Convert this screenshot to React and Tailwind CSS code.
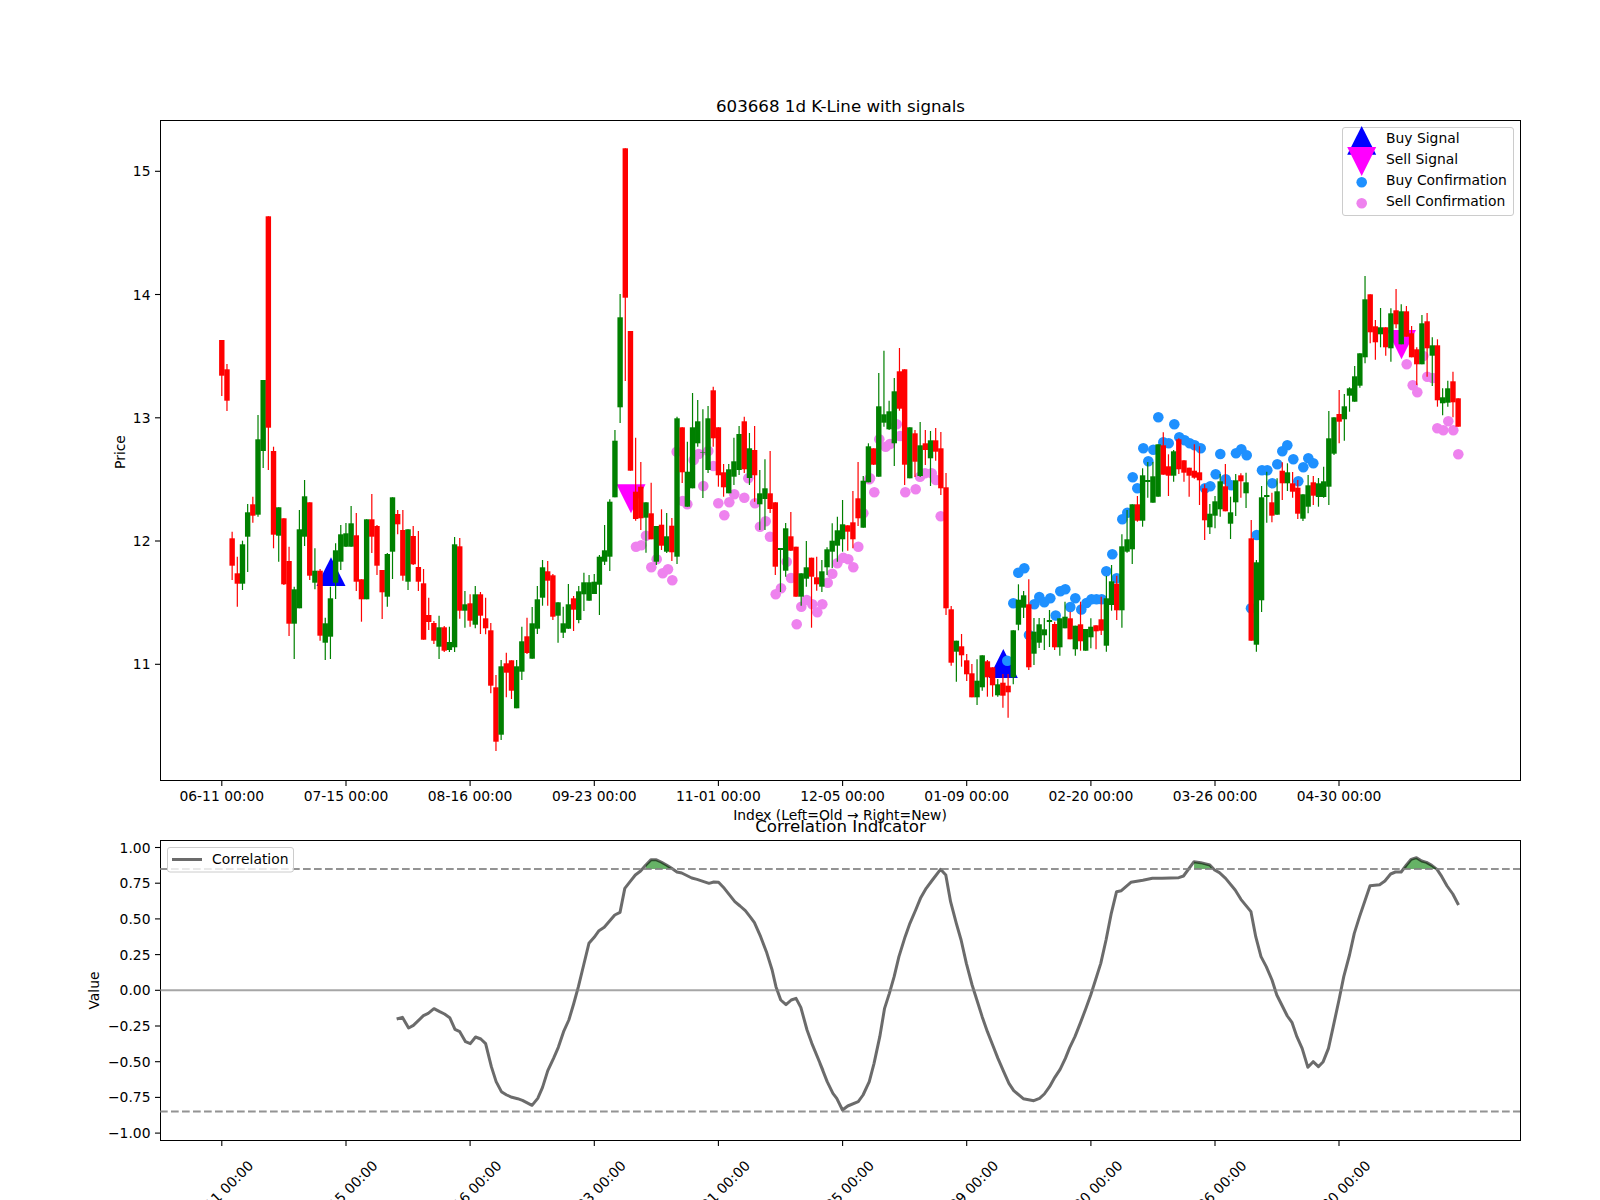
const R = '#ff0000';
const G = '#008000';
// [bodyTop, bodyBottom, wickTop, wickBottom, colour] in page pixels; one row per trading day, oldest first
const C = [
[340,375.7,340,396,'r'],[369.3,400.7,364,411,'r'],[538.3,565.7,531.7,580,'r'],[573.3,583.7,556.7,606.7,'r'],[544.3,583.7,540.7,590,'g'],
[512.3,536.7,504,572,'g'],[504.3,515.7,496.7,522.7,'r'],[439.3,514.7,415,516.7,'g'],[380,451,380,468,'g'],[216.3,427.7,216.3,470,'r'],
[451,534.7,446.7,548.3,'r'],[507.3,535.7,507.3,561.7,'g'],[518.3,584.3,518.3,585,'r'],[561,623.7,546.7,636,'r'],[589.3,623.7,586.7,659,'g'],
[529.3,608.3,510,608.3,'g'],[496.3,536.7,480,546,'g'],[502.3,575.7,502.3,580,'r'],[570.7,582.7,548.3,589.3,'g'],[570.7,635.7,569,640.7,'r'],
[623.3,642.7,617.7,660,'g'],[598.3,636.7,586.7,659,'g'],[550.3,582.7,543.3,599,'g'],[534.3,561.7,525,570,'g'],[533.3,546.7,523,547,'g'],
[523.3,546.7,506,546.7,'g'],[535.3,581.7,513,591,'r'],[579.3,599.3,579.3,621.7,'r'],[519.3,599.3,519.3,599.3,'g'],[519.3,536.7,494,553,'r'],
[526,565.7,525,575,'r'],[570,592.3,570,619,'r'],[554,596.7,553,606.7,'g'],[497.3,551.7,497.3,579,'g'],[514,524.3,510,534.3,'r'],
[530,575.7,510,580.7,'r'],[529.3,581.7,529.3,590,'g'],[536,564.3,526,565,'r'],[567,581.7,531,591,'r'],[583.3,639.7,569,639.7,'r'],
[615,622,597.7,630,'r'],[623,640.7,621,644,'r'],[627.3,646.7,615.7,659,'g'],[627.3,650.7,626,652,'r'],[642,650,626.7,652,'g'],
[544.3,647.3,537,652,'g'],[546.3,610.7,538,618.7,'r'],[604.3,610.7,591,627.7,'g'],[603.3,620.7,594.3,626.7,'r'],[594.3,624.7,586,628.3,'g'],
[594.3,615.7,592,634,'r'],[618.3,628.3,597.7,634.3,'r'],[630.3,685.7,623,693.3,'r'],[687.3,741.7,675,751,'r'],[666.3,734.7,660,740,'g'],
[663.3,672.7,652.7,697.3,'r'],[660.3,690.7,660.3,699,'r'],[666.3,708.3,660,708.3,'g'],[641.3,671.7,626.7,680,'g'],[636.3,653,617.7,654,'r'],
[623.3,658.7,607,658.7,'g'],[599.3,628.7,586,634,'g'],[567.3,597.7,560,605.7,'g'],[571.3,580.7,561,605.7,'r'],[575.3,616.7,574,620,'r'],
[602.3,615.7,602.3,642.7,'g'],[623.3,632.7,606.7,638,'g'],[604.3,628.7,584,628.7,'g'],[598.3,609.7,596,631,'r'],[591.3,620,586,623.3,'g'],
[582.3,594.3,572.7,611,'g'],[582.3,600.7,575,600.7,'g'],[581.7,594,574,594,'g'],[556.7,584.7,555,615,'g'],[550.3,561.7,525,565,'g'],
[501.7,556.7,499.3,571,'g'],[440.7,497.3,430,497.3,'g'],[317.3,407.3,294,423,'g'],[148.3,297.7,148.3,381,'r'],[331,470.7,331,470.7,'r'],
[491.7,519,437.7,520.7,'r'],[486.7,518.3,462,530,'r'],[502.3,517.7,502.3,552.7,'g'],[513.3,539.3,482.7,539.3,'r'],[526,561.7,526,565,'g'],
[524.7,545.7,509.3,550,'r'],[536.3,551.7,513,553,'g'],[525.7,552.3,518,561,'r'],[418.3,556.7,416.7,564,'g'],[427.3,472.3,427.3,483,'r'],
[471.7,506.7,441.7,506.7,'g'],[427.3,488.3,393,488.3,'g'],[421.3,443.3,400,446.7,'g'],[452,452.5,409.3,498,'g'],[418.3,470,406,473,'g'],
[390.3,438.3,386.7,446.7,'r'],[427.3,475.3,427.3,486.7,'r'],[472.3,487.3,464,496.7,'r'],[469.3,493.3,464,493.3,'g'],[461.3,476.7,437.7,485,'g'],
[434,470,426,475,'g'],[421.3,469.3,416.7,473,'r'],[448.3,478,433,485,'g'],[450,475.3,426,501.7,'r'],[493.3,504.3,470,530,'g'],
[488.3,499,459.3,530,'g'],[493.3,509,451,513,'r'],[502.3,566.7,502.3,575,'r'],[548,550,550,592,'g'],[528.3,570.7,523,576.7,'g'],
[536.3,550.7,512,551,'r'],[546.7,596.7,546.7,596.7,'r'],[573.3,596.7,573.3,605.7,'g'],[567.3,578.7,541,586.7,'g'],[557.7,576.7,557.7,627.7,'r'],
[577.3,584.3,556.7,590.7,'r'],[571.3,586.7,560,592,'g'],[549.3,567.3,547.3,575,'g'],[540.7,551.7,523.3,568,'g'],[530.3,545.7,516.7,561.7,'g'],
[524.3,539.3,500,551.7,'g'],[525.3,531.7,525.3,550.7,'r'],[522.3,539.3,491,548.3,'r'],[498.3,518.3,462,526,'r'],[480.7,527.7,476,527.7,'g'],
[446.3,482.3,443.3,482.3,'g'],[448.3,464.7,448.3,465,'r'],[406.3,476.7,373,476.7,'g'],[414.3,422.7,350.7,426.7,'g'],[411.3,429.3,400.7,430,'g'],
[391.3,443.3,378,466,'g'],[371.3,408.7,348,410.7,'r'],[369.3,464.7,369.3,485,'r'],[427.3,478.3,427.3,478.3,'g'],[433.3,461.7,430,477,'r'],
[445.3,476,422,477,'g'],[443.3,450,430,465,'r'],[440.3,458.3,431,486,'g'],[440.3,451.7,428,460.7,'r'],[448.3,488.3,432,495,'r'],
[487.3,608.3,473,615,'r'],[609.3,662.7,606,665.7,'r'],[640.7,651.7,640.7,681.7,'g'],[646.3,655.3,634,666.7,'r'],[660.3,674.3,654,681,'r'],
[673.3,697.3,664,697.3,'r'],[680.7,697.3,659.3,705,'g'],[655.3,687.3,655.3,690.7,'g'],[661.3,677.3,660,696.7,'r'],[667.3,685.3,667.3,696.7,'r'],
[684.3,695.3,679,696.7,'g'],[682.7,695.7,674,707.7,'r'],[685.7,692.3,674,717.7,'r'],[630.3,677.3,630.3,684.3,'g'],[599.7,624.7,584.3,630.3,'g'],
[595.3,607.7,591,618,'g'],[604.3,667.3,579.3,670,'r'],[631.7,653.7,618,665,'g'],[624.3,642.7,618,648,'g'],[629.3,635.3,618,650,'g'],
[620,622,610,647,'g'],[624,647.3,621.7,650,'r'],[618.3,647.3,618.3,655.7,'g'],[616.7,628.3,601.7,628.3,'g'],[618.3,639.3,611.7,639.3,'r'],
[625.7,649.3,625.7,655.7,'g'],[624.3,641.3,601.7,650.7,'r'],[629,650.7,629,650.7,'g'],[626.7,637.3,618.3,648.3,'g'],[625.3,631.3,625.3,649.3,'r'],
[619.3,630.7,596.7,635,'r'],[598.3,645.7,576,651.7,'g'],[581.3,605,565,610.7,'g'],[583.7,610.3,575.7,620,'r'],[546.3,610.3,534.3,627.7,'g'],
[539.3,551.7,510,552.7,'g'],[504.3,549.3,504.3,564,'g'],[504.3,520.7,496,521.7,'r'],[475.3,520.7,468.3,526.7,'g'],[480,482,462,497.7,'g'],
[476.3,502.7,462,502.7,'g'],[444.3,496.7,444.3,496.7,'g'],[445.3,474.7,432.3,474.7,'r'],[466.3,475.7,454.3,496,'r'],[451.3,475.7,450,481.7,'g'],
[439.3,469.3,438.3,474,'r'],[460.3,472.7,460.3,481.7,'r'],[467.7,475.7,467.7,496.7,'r'],[470.7,477.7,444.3,478.7,'r'],[472.3,480.3,446.3,505,'r'],
[488.3,520.3,484.3,540,'r'],[513.7,527.3,504,534,'g'],[501.3,515.7,496,528.3,'g'],[481.3,509.3,474,516.7,'g'],[486.3,511.3,464,511.3,'r'],
[512.3,523.7,496.7,539,'g'],[480.3,502.3,474,516,'g'],[475.3,481.3,473.3,497.7,'r'],[482.3,493.3,472.7,508,'g'],[538.3,640.7,520,640.7,'r'],
[562.3,644.7,560,651.7,'g'],[497.3,600.3,486,612,'g'],[495,497,471.7,522.7,'g'],[502.3,515.7,492.7,522.3,'r'],[491.3,514.7,478.3,514.7,'g'],
[470.7,483.3,462.3,500,'r'],[472.3,483.3,463.3,491,'g'],[483.3,491.7,472,497.7,'r'],[487.7,513.7,480,519,'r'],[494.3,518.7,494.3,521,'g'],
[485.3,506.7,475,513.3,'g'],[482.3,495.7,476,505,'r'],[483.3,497,478,506.7,'g'],[481.3,497,466.7,497.7,'g'],[438.3,486.7,411,505,'g'],
[417.3,453.7,417.3,455,'g'],[414,421.7,390,443.3,'r'],[406.3,419.3,394,440.7,'g'],[388.3,395.7,387.3,411.7,'g'],[376.3,401.7,366,401.7,'g'],
[353.3,385.7,353.3,387.7,'g'],[299.3,357.3,276,363.3,'g'],[294.3,332.3,294.3,343.3,'r'],[326.3,342.3,320,359.7,'r'],[327.3,334.3,308,347.3,'g'],
[327.3,347.3,327.3,355.7,'r'],[313.3,348.3,308.3,361.7,'g'],[310.3,324.3,289,328.3,'r'],[311.3,344.3,304.3,344.3,'g'],[311.3,336.7,306,336.7,'r'],
[333.3,357.3,326,357.3,'r'],[349.3,364.3,347.3,385,'r'],[323.3,364.3,315,364.3,'g'],[321.3,348.3,313,376.7,'r'],[345.3,355.7,337.3,386,'g'],
[345.3,400.3,339.3,406.7,'r'],[397.3,403.3,388.3,415.3,'g'],[388.3,402.7,380.7,406.7,'g'],[381.3,402.3,371.7,417.3,'r'],[398.3,426.7,398.3,426.7,'r'],
];
const PINK = [[676.7,451.7],[698.7,454],[693.7,460],[708.3,451],[713.3,466],[748.3,478.3],[896.7,424.3],[879.3,439.3],[885.7,446.7],[890,444],[900,436],[870,478.3],[920,476.7],[925,473.3],[931.7,473.3],[703.3,486],[682.7,501],[687.3,504.3],[718.3,503.3],[729.3,502.3],[734.3,494.3],[744.3,497.7],[724.3,515.3],[755,503.3],[760,526.7],[765.7,521.3],[770,536.7],[646,535.7],[636,546.7],[641.3,545.3],[656.7,559.3],[651.3,567.3],[662.7,573.3],[668,569.3],[672.3,580.3],[786.7,561.7],[791,578],[781,588.3],[775.7,594.3],[796.7,624.3],[801.3,606.7],[806.7,600],[812.3,604.3],[817.3,612.3],[822.3,604.3],[827.7,582.7],[832.3,573.7],[837.3,563.3],[843.3,557.7],[848.3,559.3],[853.3,567.3],[858.3,546.7],[863.3,513.3],[874.3,492.3],[869.3,479.3],[905.3,492.3],[915.7,489.3],[936,480],[940.7,516.3],[1406.7,364.3],[1427.3,376.7],[1412.7,385.3],[1417.3,392.3],[1423.3,356],[1432.7,378],[1448.3,421.3],[1437.3,428.3],[1443.3,430.3],[1453.3,430.3],[1458.3,454.3]];
const BLUE = [[1007.3,660.7],[1013.3,603.3],[1018.3,572.7],[1024.3,568.3],[1029,635],[1034.3,604.3],[1039.3,597],[1044.3,602.3],[1050.3,598.3],[1055.7,615.5],[1060.3,591.3],[1065.3,589.3],[1070.3,607],[1075.3,598.3],[1081.3,609.5],[1086.5,603],[1091.5,599.3],[1096.5,599.3],[1101.7,599.3],[1106.3,571.3],[1112.3,554.3],[1116.7,578.3],[1122.3,519.3],[1127.3,512.7],[1132.7,477.3],[1137.3,488.3],[1143.3,448.3],[1148.3,461.3],[1153.3,449.7],[1158.3,417.3],[1163.3,442.3],[1168.7,443.3],[1174.3,424.3],[1179.3,437.3],[1184.7,440.3],[1189.7,443.3],[1194.7,445.3],[1200.7,448.3],[1205,488.3],[1210.3,486.3],[1215.7,474.3],[1220.3,454],[1225.7,479.3],[1231.3,485.3],[1236,453.3],[1241.3,449.3],[1246.7,455.3],[1251,608.3],[1256.7,535],[1262,470.3],[1267.3,470.3],[1272.3,483.3],[1277.3,464.3],[1282.3,451.3],[1287.3,445.3],[1293.3,459.3],[1298.3,481.3],[1303.3,467.3],[1308.3,458.3],[1313.3,463.3]];
const Z7 = [[662,657],[674,652],[687,684],[697,676],[718,647],[728,640],[740,626],[752,635],[762,642],[773,653],[784,688],[794,695],[806,725],[816,731],[827,711],[838,717],[848,731],[860,800],[870,845],[881,875],[892,885],[903,892],[915,896],[925,901],[945,916],[957,895],[967,862],[978,812],[990,775],[1000,742],[1011,695],[1022,660],[1032,612],[1042,560],[1053,495],[1064,430],[1075,412],[1085,392],[1096,382],[1118,345],[1129,337],[1139,265],[1150,245],[1161,225],[1172,213],[1183,195],[1194,179],[1204,179],[1215,186],[1226,195],[1237,205],[1248,216],[1258,219],[1279,234],[1290,238],[1315,250],[1325,246],[1335,247],[1347,265],[1369,305],[1380,318],[1391,332],[1402,352],[1410,368],[1423,410],[1435,455],[1447,510],[1455,560],[1465,600],[1476,614],[1487,600],[1497,595],[1507,622],[1520,690],[1530,730],[1553,810]];
const Z8 = [[0,790],[15,845],[27,880],[35,895],[47,930],[58,918],[80,905],[90,885],[103,845],[113,790],[125,710],[135,625],[145,580],[155,530],[165,470],[178,410],[188,370],[200,330],[210,295],[222,265],[235,240],[252,208],[263,225],[273,305],[285,370],[295,420],[306,490],[318,555],[328,600],[339,650],[350,695],[361,735],[372,775],[384,815],[395,850],[405,872],[425,896],[447,902],[459,895],[469,882],[480,860],[491,832],[502,808],[513,775],[522,743],[533,710],[544,670],[556,625],[566,585],[576,540],[587,490],[598,420],[609,340],[620,275],[630,272],[650,247],[675,241],[695,235],[715,235],[750,233],[760,228],[782,185],[796,188],[815,195],[825,210],[835,218],[848,235],[868,270],[880,298],[901,335],[911,410],[922,470],[933,500],[945,540],[955,585],[977,648],[987,668],[997,710],[1008,745],[1020,802],[1031,785],[1042,800],[1052,785],[1063,745],[1073,680],[1085,600],[1095,530],[1107,465],[1117,400],[1128,350],[1150,257],[1170,254],[1181,243],[1193,222],[1203,216],[1215,216],[1226,195],[1236,178],[1247,173],[1258,183],[1268,187],[1279,196],[1290,208],[1300,230],[1311,258],[1323,282],[1335,315]];
const sx = 1568 / 750;
const p7 = ([x, y]) => [80 + x / sx, 800 + y / 3];
const p8 = ([x, y]) => [820 + x / sx, 800 + y / 3];
const toPts = (a) => a.map((p) => p.join(',')).join(' ');
const CORR = [...Z7.map(p7), ...Z8.map(p8)];
const FILLS = [
  [[1183, 207], [1183, 195], [1194, 179], [1204, 179], [1215, 186], [1226, 195], [1237, 205], [1239, 207]].map(p7),
  [[782, 207], [782, 185], [796, 188], [815, 195], [821, 207]].map(p8),
  [[1218, 207], [1226, 195], [1236, 178], [1247, 173], [1258, 183], [1268, 187], [1279, 196], [1290, 207]].map(p8),
];
const TX = [
  [221.8, '06-11 00:00'], [346, '07-15 00:00'], [470.1, '08-16 00:00'], [594.3, '09-23 00:00'], [718.4, '11-01 00:00'],
  [842.6, '12-05 00:00'], [966.7, '01-09 00:00'], [1090.9, '02-20 00:00'], [1215, '03-26 00:00'], [1339, '04-30 00:00'],
];
const PY = [[171.3, '15'], [294.5, '14'], [417.8, '13'], [541, '12'], [664.3, '11']];
const CY = [[847.5, '1.00'], [883.2, '0.75'], [918.9, '0.50'], [954.6, '0.25'], [990.3, '0.00'], [1026, '−0.25'], [1061.7, '−0.50'], [1097.4, '−0.75'], [1133.1, '−1.00']];
const cx = (i) => 221.8 + i * 5.173;
const tri = (x, top, bottom, hw) => `${x},${top} ${x - hw},${bottom} ${x + hw},${bottom}`;
const triDown = (x, top, bottom, hw) => `${x - hw},${top} ${x + hw},${top} ${x},${bottom}`;
const FONT = 'font-["DejaVu_Sans",sans-serif]';

function Panel({ h, height, view, children }) {
  return (
    <div className={`box-border w-[1361px] border border-black shrink-0 ${h}`}>
      <svg viewBox={view} width="1361" height={height} className="-m-px block overflow-visible text-[13.89px]" fill="#000">
        {children}
      </svg>
    </div>
  );
}

export default function App() {
  return (
    <div className={`w-[1600px] h-[1200px] overflow-hidden bg-white pl-[160px] pt-[94px] text-black ${FONT}`}>
      <div className="w-[1361px] h-[26px] text-center text-[16.67px] leading-[25px]">603668 1d K-Line with signals</div>
      <Panel h="h-[661px]" height={661} view="160 120 1361 661">
        {PINK.map(([x, y], i) => <circle key={i} cx={x} cy={y} r="5.3" fill="#ee82ee" />)}
        <polygon points={tri(331, 557.3, 586, 14.5)} fill="#0000ff" />
        <polygon points={tri(1003.3, 649, 678, 14.5)} fill="#0000ff" />
        <polygon points={triDown(631, 484.3, 513.3, 14.5)} fill="#ff00ff" />
        <polygon points={triDown(1401.5, 330, 359.3, 14.5)} fill="#ff00ff" />
        {BLUE.map(([x, y], i) => <circle key={i} cx={x} cy={y} r="5.3" fill="#1e90ff" />)}
        {C.map(([t, b, , , c], i) => <rect key={i} x={cx(i) - 2.7} y={t} width="5.4" height={b - t} fill={c === 'r' ? R : G} />)}
        {C.map(([, , wt, wb, c], i) => <line key={i} x1={cx(i)} x2={cx(i)} y1={wt} y2={wb} stroke={c === 'r' ? R : G} strokeWidth="1.2" />)}

        {PY.map(([y, t]) => (
          <g key={t}>
            <line x1="155" x2="160" y1={y} y2={y} stroke="#000" strokeWidth="1.1" />
            <text x="150.5" y={y} textAnchor="end" dominantBaseline="central">{t}</text>
          </g>
        ))}
        {TX.map(([x, t]) => (
          <g key={t}>
            <line x1={x} x2={x} y1="781" y2="786" stroke="#000" strokeWidth="1.1" />
            <text x={x} y="796" textAnchor="middle" dominantBaseline="central">{t}</text>
          </g>
        ))}
        <text x="119.5" y="452" textAnchor="middle" dominantBaseline="central" transform="rotate(-90 119.5 452)">Price</text>
        <text x="840" y="815" textAnchor="middle" dominantBaseline="central">Index (Left=Old → Right=New)</text>

        <rect x="1342.5" y="127.5" width="171" height="88" rx="2.5" fill="#fff" fillOpacity="0.8" stroke="#ccc" />
        <polygon points={tri(1361.7, 126, 154.7, 14.5)} fill="#0000ff" />
        <polygon points={triDown(1361.7, 147, 176, 14.5)} fill="#ff00ff" />
        <circle cx="1361.7" cy="182.3" r="5.3" fill="#1e90ff" />
        <circle cx="1361.7" cy="203.3" r="5.3" fill="#ee82ee" />
        <text x="1386" y="138" dominantBaseline="central">Buy Signal</text>
        <text x="1386" y="159" dominantBaseline="central">Sell Signal</text>
        <text x="1386" y="180" dominantBaseline="central">Buy Confirmation</text>
        <text x="1386" y="201" dominantBaseline="central">Sell Confirmation</text>
      </Panel>
      <div className="w-[1361px] h-[59px] pt-[36px] text-center text-[16.67px] leading-[20px]">Correlation Indicator</div>
      <Panel h="h-[301px]" height={301} view="160 840 1361 301">
        {FILLS.map((f, i) => <polygon key={i} points={toPts(f)} fill="#008000" fillOpacity="0.6" />)}
        <polyline points={toPts(CORR)} fill="none" stroke="#000" strokeOpacity="0.58" strokeWidth="3" strokeLinejoin="round" />
        <line x1="160" x2="1520" y1="869" y2="869" stroke="#808080" strokeOpacity="0.85" strokeWidth="2.1" strokeDasharray="7.7 3.3" />
        <line x1="160" x2="1520" y1="1111.5" y2="1111.5" stroke="#808080" strokeOpacity="0.85" strokeWidth="2.1" strokeDasharray="7.7 3.3" />
        <line x1="160" x2="1520" y1="990.3" y2="990.3" stroke="#808080" strokeOpacity="0.7" strokeWidth="2.1" />

        {CY.map(([y, t]) => (
          <g key={t}>
            <line x1="155" x2="160" y1={y} y2={y} stroke="#000" strokeWidth="1.1" />
            <text x="150.5" y={y} textAnchor="end" dominantBaseline="central">{t}</text>
          </g>
        ))}
        {TX.map(([x, t]) => (
          <g key={t}>
            <line x1={x} x2={x} y1="1141" y2="1146" stroke="#000" strokeWidth="1.1" />
            <text x={x - 1} y="1193" textAnchor="middle" dominantBaseline="central" transform={`rotate(-45 ${x - 1} 1193)`}>{t}</text>
          </g>
        ))}
        <text x="93.5" y="990.5" textAnchor="middle" dominantBaseline="central" transform="rotate(-90 93.5 990.5)">Value</text>

        <rect x="167.5" y="847.5" width="126" height="24.5" rx="2.5" fill="#fff" fillOpacity="0.8" stroke="#ccc" />
        <line x1="172" x2="202" y1="859.5" y2="859.5" stroke="#000" strokeOpacity="0.58" strokeWidth="3" />
        <text x="212" y="859.3" dominantBaseline="central">Correlation</text>
      </Panel>
    </div>
  );
}
